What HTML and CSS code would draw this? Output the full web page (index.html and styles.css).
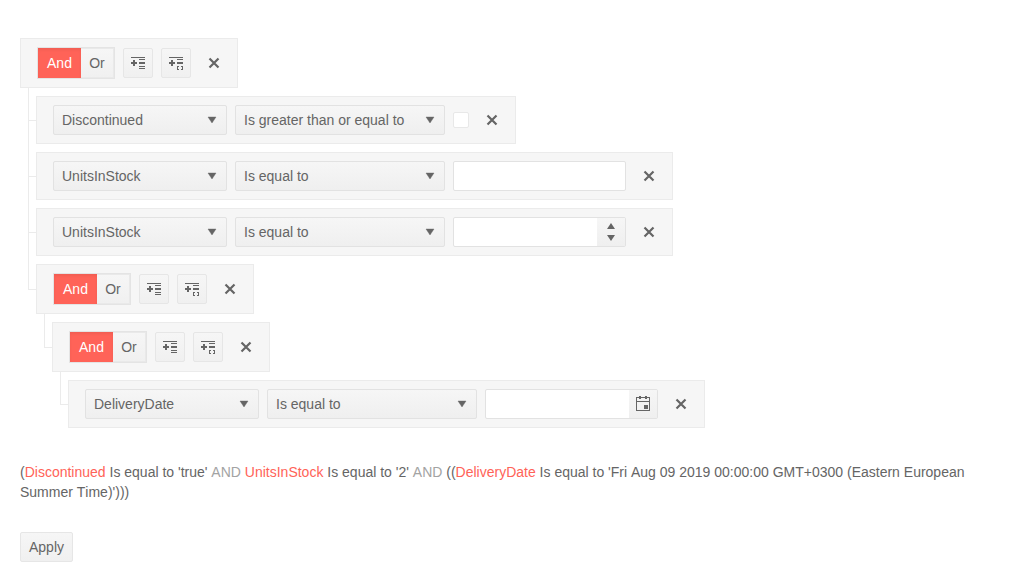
FILE: index.html
```
<!DOCTYPE html>
<html lang="en">
<head>
<meta charset="utf-8">
<meta name="viewport" content="width=device-width, initial-scale=1">
<title>Filter</title>
<link rel="stylesheet" href="styles.css">
</head>
<body>
<svg class="sprite" aria-hidden="true">
  <symbol id="add-expression" viewBox="0 0 16 16"><path d="M1 2h14v1H1zM9 4h6v1H9zM3 5h2v2h2v2H5v2H3V9H1V7h2zM9 7h6v2H9zM9 11h6v1H9zM9 13h6v1H9z"/></symbol>
  <symbol id="add-group" viewBox="0 0 16 16"><path d="M1 2h14v1H1zM9 4h6v1H9zM3 5h2v2h2v2H5v2H3V9H1V7h2zM9 7h6v2H9zM9 11h2v1h-1v2h1v1H9zM13 11h2v4h-2v-1h1v-2h-1z"/></symbol>
  <symbol id="close" viewBox="0 0 16 16"><path d="M3.5 3.5l9 9M12.5 3.5l-9 9" fill="none" stroke="currentColor" stroke-width="2.2"/></symbol>
  <symbol id="arrow-down" viewBox="0 0 16 16"><path d="M4 5h8l-4 6z" stroke="currentColor" stroke-width=".4"/></symbol>
  <symbol id="spin-up" viewBox="0 0 8 6"><path d="M0 6h8L4 0z"/></symbol>
  <symbol id="spin-down" viewBox="0 0 8 6"><path d="M0 0h8L4 6z"/></symbol>
  <symbol id="calendar" viewBox="0 0 16 16"><path fill-rule="evenodd" d="M4 0h2v1h4V0h2v1h3v14H1V1h3zM2 2v3h12V2h-2v1h-2V2H6v1H4V2zM2 6v8h12V6zM9 9h4v4H9z"/></symbol>
</svg>

<main class="page">
  <div class="filter">
    <div class="toolbar">
      <div class="button-group" role="group" aria-label="Logic">
        <button type="button" class="logic selected" aria-pressed="true">And</button>
        <button type="button" class="logic" aria-pressed="false">Or</button>
      </div>
      <button type="button" class="button icon-button" aria-label="Add expression"><svg class="icon"><use href="#add-expression"/></svg></button>
      <button type="button" class="button icon-button" aria-label="Add group"><svg class="icon"><use href="#add-group"/></svg></button>
      <button type="button" class="button icon-button flat" aria-label="Remove group"><svg class="icon"><use href="#close"/></svg></button>
    </div>
    <ul class="lines">
      <li>
        <div class="toolbar">
          <span class="dropdown field"><select aria-label="Field"><option>Discontinued</option></select><svg class="icon"><use href="#arrow-down"/></svg></span>
          <span class="dropdown operator"><select aria-label="Operator"><option>Is greater than or equal to</option></select><svg class="icon"><use href="#arrow-down"/></svg></span>
          <input type="checkbox" class="checkbox" aria-label="Value">
          <button type="button" class="button icon-button flat" aria-label="Remove expression"><svg class="icon"><use href="#close"/></svg></button>
        </div>
      </li>
      <li>
        <div class="toolbar">
          <span class="dropdown field"><select aria-label="Field"><option>UnitsInStock</option></select><svg class="icon"><use href="#arrow-down"/></svg></span>
          <span class="dropdown operator"><select aria-label="Operator"><option>Is equal to</option></select><svg class="icon"><use href="#arrow-down"/></svg></span>
          <span class="value"><input type="text" aria-label="Value"></span>
          <button type="button" class="button icon-button flat" aria-label="Remove expression"><svg class="icon"><use href="#close"/></svg></button>
        </div>
      </li>
      <li>
        <div class="toolbar">
          <span class="dropdown field"><select aria-label="Field"><option>UnitsInStock</option></select><svg class="icon"><use href="#arrow-down"/></svg></span>
          <span class="dropdown operator"><select aria-label="Operator"><option>Is equal to</option></select><svg class="icon"><use href="#arrow-down"/></svg></span>
          <span class="value">
            <input type="text" inputmode="numeric" aria-label="Value">
            <span class="addon spinner">
              <button type="button" aria-label="Increase value"><svg class="spin"><use href="#spin-up"/></svg></button>
              <button type="button" aria-label="Decrease value"><svg class="spin"><use href="#spin-down"/></svg></button>
            </span>
          </span>
          <button type="button" class="button icon-button flat" aria-label="Remove expression"><svg class="icon"><use href="#close"/></svg></button>
        </div>
      </li>
      <li>
        <div class="toolbar">
          <div class="button-group" role="group" aria-label="Logic">
            <button type="button" class="logic selected" aria-pressed="true">And</button>
            <button type="button" class="logic" aria-pressed="false">Or</button>
          </div>
          <button type="button" class="button icon-button" aria-label="Add expression"><svg class="icon"><use href="#add-expression"/></svg></button>
          <button type="button" class="button icon-button" aria-label="Add group"><svg class="icon"><use href="#add-group"/></svg></button>
          <button type="button" class="button icon-button flat" aria-label="Remove group"><svg class="icon"><use href="#close"/></svg></button>
        </div>
        <ul class="lines">
          <li>
            <div class="toolbar">
              <div class="button-group" role="group" aria-label="Logic">
                <button type="button" class="logic selected" aria-pressed="true">And</button>
                <button type="button" class="logic" aria-pressed="false">Or</button>
              </div>
              <button type="button" class="button icon-button" aria-label="Add expression"><svg class="icon"><use href="#add-expression"/></svg></button>
              <button type="button" class="button icon-button" aria-label="Add group"><svg class="icon"><use href="#add-group"/></svg></button>
              <button type="button" class="button icon-button flat" aria-label="Remove group"><svg class="icon"><use href="#close"/></svg></button>
            </div>
            <ul class="lines">
              <li>
                <div class="toolbar">
                  <span class="dropdown field"><select aria-label="Field"><option>DeliveryDate</option></select><svg class="icon"><use href="#arrow-down"/></svg></span>
                  <span class="dropdown operator"><select aria-label="Operator"><option>Is equal to</option></select><svg class="icon"><use href="#arrow-down"/></svg></span>
                  <span class="value">
                    <input type="text" aria-label="Date">
                    <button type="button" class="addon" aria-label="Open calendar"><svg class="icon"><use href="#calendar"/></svg></button>
                  </span>
                  <button type="button" class="button icon-button flat" aria-label="Remove expression"><svg class="icon"><use href="#close"/></svg></button>
                </div>
              </li>
            </ul>
          </li>
        </ul>
      </li>
    </ul>
  </div>

  <p class="preview">(<span class="preview-field">Discontinued</span> Is equal to 'true' <span class="preview-logic">AND</span> <span class="preview-field">UnitsInStock</span> Is equal to '2' <span class="preview-logic">AND</span> ((<span class="preview-field">DeliveryDate</span> Is equal to 'Fri Aug 09 2019 00:00:00 GMT+0300 (Eastern European Summer Time)')))</p>

  <button type="button" class="button">Apply</button>
</main>
</body>
</html>
```
FILE: styles.css
```
*,
*::before,
*::after {
  box-sizing: border-box;
}

body {
  margin: 0;
  background: #fff;
  color: #656565;
  font-family: Arial, "Liberation Sans", sans-serif;
  font-size: 14px;
  line-height: 20px;
  font-kerning: none;
  text-rendering: optimizeSpeed;
}

button,
input,
select {
  margin: 0;
  color: inherit;
  font: inherit;
  font-kerning: inherit;
  text-rendering: inherit;
}

.sprite {
  display: none;
}

.page {
  padding: 38px 20px 20px;
}

.toolbar {
  position: relative;
  display: flex;
  align-items: center;
  gap: 8px;
  width: fit-content;
  padding: 8px 8px 8px 16px;
  border: 1px solid #ebebeb;
  background: #f6f6f6;
}

.lines {
  margin: 0;
  padding: 0 0 0 16px;
  list-style: none;
}

.lines > li {
  position: relative;
  padding-top: 8px;
}

/* Tree connectors */
.lines > li::before {
  content: "";
  position: absolute;
  top: 0;
  left: -8px;
  height: 100%;
  border-left: 1px solid #ebebeb;
}

.lines > li:last-child::before {
  height: 33px;
}

.lines > li > .toolbar::before {
  content: "";
  position: absolute;
  top: 50%;
  left: -9px;
  width: 8px;
  border-top: 1px solid #ebebeb;
}

.icon {
  display: block;
  width: 16px;
  height: 16px;
  fill: currentColor;
}

.button {
  display: inline-flex;
  align-items: center;
  justify-content: center;
  height: 30px;
  padding: 0 8px;
  border: 1px solid #e6e6e6;
  border-radius: 2px;
  background: linear-gradient(#f6f6f6, #f0f0f0);
}

.icon-button {
  width: 30px;
  padding: 0;
}

.flat {
  border-color: transparent;
  background: none;
}

.button-group {
  display: flex;
  height: 32px;
  border: 1px solid #e4e4e4;
}

.logic {
  width: 33px;
  padding: 0;
  border: 1px solid #e9e9e9;
  border-left: 0;
  background: linear-gradient(#f6f6f6, #f0f0f0);
}

.logic.selected {
  width: 43px;
  border: 0;
  background: #ff6358;
  box-shadow: inset 0 2px 3px rgba(0, 0, 0, 0.06);
  color: #fff;
}

.dropdown {
  display: grid;
  align-items: center;
}

.dropdown > * {
  grid-area: 1 / 1;
}

.dropdown select {
  width: 100%;
  height: 30px;
  padding: 0 30px 0 8px;
  border: 1px solid #e2e2e2;
  border-radius: 2px;
  appearance: none;
  background: linear-gradient(#f6f6f6, #efefef);
}

.dropdown .icon {
  justify-self: end;
  margin-right: 7px;
  pointer-events: none;
}

.field {
  width: 174px;
}

.operator {
  width: 210px;
}

.checkbox {
  width: 16px;
  height: 16px;
  border: 1px solid #e8e8e8;
  border-radius: 2px;
  appearance: none;
  background: #fff;
}

.value {
  display: flex;
  width: 173px;
  height: 30px;
  border: 1px solid #e2e2e2;
  border-radius: 2px;
  background: #fff;
}

.value input {
  flex: 1;
  min-width: 0;
  padding: 0 8px;
  border: 0;
  background: none;
}

.addon {
  display: flex;
  align-items: center;
  justify-content: center;
  width: 28px;
  padding: 0;
  border: 0;
  background: linear-gradient(#f6f6f6, #efefef);
}

.spinner {
  flex-direction: column;
}

.spinner button {
  display: flex;
  align-items: center;
  justify-content: center;
  width: 100%;
  height: 12px;
  padding: 0;
  border: 0;
  background: none;
}

.spin {
  width: 8px;
  height: 6px;
  fill: currentColor;
}

.preview {
  margin: 34px 0 30px;
}

.preview-field {
  color: #ff6358;
}

.preview-logic {
  color: #a3a3a3;
}
```
